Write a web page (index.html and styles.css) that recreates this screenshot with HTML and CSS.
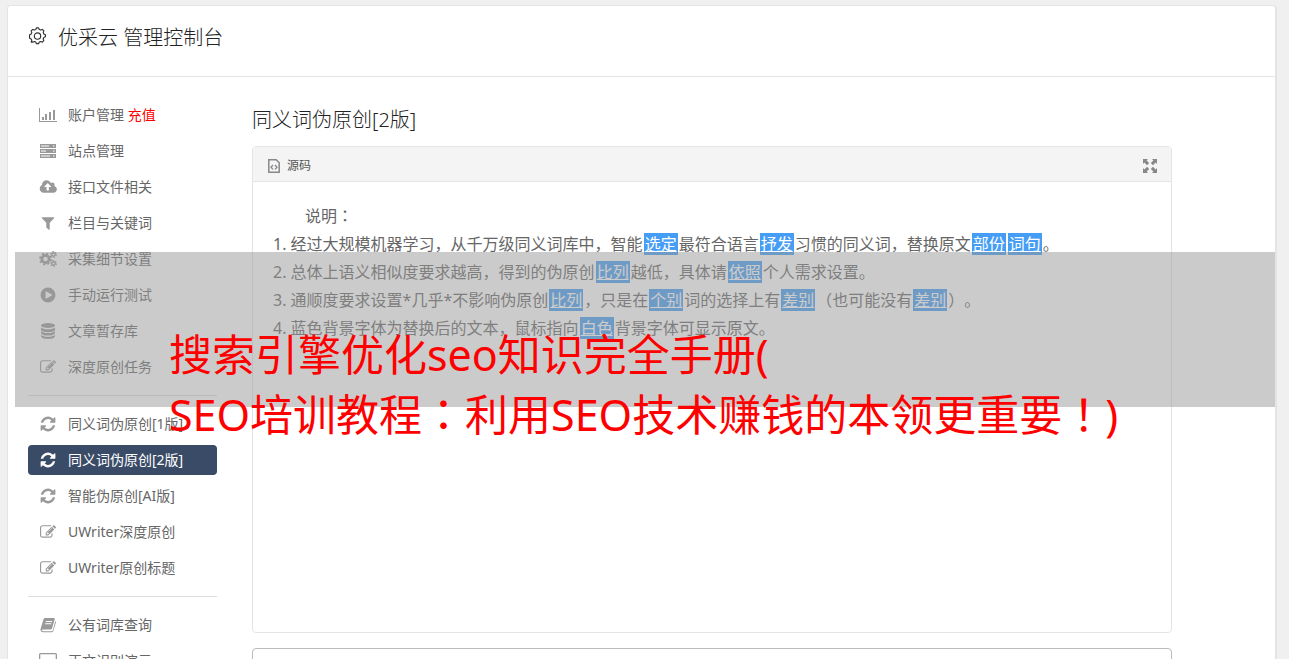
FILE: index.html
```html
<!DOCTYPE html>
<html lang="zh-CN">

<head>
    <meta charset="utf-8">
    <meta name="viewport" content="width=device-width, initial-scale=1.0">
    <title>优采云 管理控制台</title>
    <link rel="stylesheet" href="styles.css">
</head>

<body>
    <!-- shared icons -->
    <svg class="sprite" aria-hidden="true">
        <symbol id="i-refresh" viewBox="-64 -64 1664 1664">
            <path d="M1511 928q0 5-1 7-64 268-268 434.5t-478 166.5q-146 0-282.5-55t-243.5-157l-129 129q-19 19-45 19t-45-19-19-45v-448q0-26 19-45t45-19h448q26 0 45 19t19 45-19 45l-137 137q71 66 161 102t187 36q134 0 250-65t186-179q11-17 53-117 8-23 30-23h192q13 0 22.5 9.5t9.5 22.5zm25-800v448q0 26-19 45t-45 19h-448q-26 0-45-19t-19-45 19-45l138-138q-148-137-349-137-134 0-250 65t-186 179q-11 17-53 117-8 23-30 23h-199q-13 0-22.5-9.5t-9.5-22.5v-7q65-268 270-434.5t480-166.5q146 0 284 55.5t245 156.5l130-129q19-19 45-19t45 19 19 45z"/>
        </symbol>
        <symbol id="i-edit" viewBox="0 0 1792 1792">
            <path d="M888 1184l116-116-152-152-116 116v56h96v96h56zm440-720q-16-16-33 1l-350 350q-17 17-1 33t33-1l350-350q17-17 1-33zm80 594v190q0 119-84.5 203.5t-203.5 84.5h-832q-119 0-203.5-84.5t-84.5-203.5v-832q0-119 84.5-203.5t203.5-84.5h832q63 0 117 25 15 7 18 23 3 17-9 29l-49 49q-14 14-32 8-23-6-45-6h-832q-66 0-113 47t-47 113v832q0 66 47 113t113 47h832q66 0 113-47t47-113v-126q0-13 9-22l64-64q15-15 35-7t20 29zm-96-738l288 288-672 672h-288v-288zm444 132l-92 92-288-288 92-92q28-28 68-28t68 28l152 152q28 28 28 68t-28 68z"/>
        </symbol>
    </svg>

    <div class="card">
        <header class="card-header">
            <svg class="gear" viewBox="0 0 18 18" fill="none" stroke="currentColor">
                <path stroke-width="1.1" stroke-linejoin="round" d="M7.3 2.4 8 .9h2l.7 1.5 1.3.5 1.6-.6 1.4 1.4-.6 1.6.6 1.3 1.5.7v2l-1.5.7-.6 1.4.6 1.5-1.4 1.4-1.6-.6-1.3.6-.7 1.5H8l-.7-1.5-1.3-.6-1.6.6L3 14.3l.6-1.5-.6-1.4-1.5-.7V7.3L3 6.600l.6-1.3L3 3.700l1.400-1.400 1.600.6z"/>
                <circle cx="9" cy="8.6" r="3" stroke-width="1.1"/>
            </svg>
            <h1>优采云 管理控制台</h1>
        </header>

        <div class="card-body">
            <nav class="sidebar">
                <a href="#">
                    <svg class="wide" viewBox="0 0 18 16"><path d="M0 1h1v13h17v1H0zM3 10h2v3H3zM6 7h2v6H6zM10 5h2v8h-2zM14 3h2v10h-2z"/></svg>
                    <span>账户管理 <em>充值</em></span>
                </a>
                <a href="#">
                    <svg viewBox="0 0 16 16"><path fill-rule="evenodd" d="M0 1h16v4H0zM1 2.500v1h8v-1zM13 2.500v1h1.500v-1zM0 6h16v4H0zM1 7.500v1h5v-1zM13 7.500v1h1.500v-1zM0 11h16v4H0zM1 12.500v1h9v-1zM13 12.500v1h1.500v-1z"/></svg>
                    <span>站点管理</span>
                </a>
                <a href="#">
                    <svg class="wide" viewBox="0 0 1984 1792"><path d="M1344 864q0-14-9-23l-352-352q-9-9-23-9t-23 9l-351 351q-10 12-10 24 0 14 9 23t23 9h224v352q0 13 9.500 22.500t22.500 9.500h192q13 0 22.500-9.500t9.500-22.500v-352h224q13 0 22.500-9.500t9.500-22.500zm640 288q0 159-112.500 271.500t-271.500 112.500h-1088q-185 0-316.500-131.500t-131.500-316.500q0-130 70-240t188-165q-2-30-2-43 0-212 150-362t362-150q156 0 285.500 87t188.500 231q71-62 166-62 106 0 181 75t75 181q0 76-41 138 130 31 213.500 135.500t83.500 238.500z"/></svg>
                    <span>接口文件相关</span>
                </a>
                <a href="#">
                    <svg viewBox="0 0 1792 1792"><path d="M1595 295q17 41-14 70l-493 493v742q0 42-39 59-13 5-25 5-27 0-45-19l-256-256q-19-19-19-45v-486l-493-493q-31-29-14-70 17-39 59-39h1280q42 0 59 39z"/></svg>
                    <span>栏目与关键词</span>
                </a>
                <a href="#">
                    <svg class="wide" viewBox="0 0 18 16" fill="none" stroke="currentColor">
                        <circle cx="6.500" cy="8" r="3.600" stroke-width="2.600"/>
                        <circle cx="6.500" cy="8" r="5.500" stroke-width="1.800" stroke-dasharray="2.160"/>
                        <circle cx="14.500" cy="3.500" r="1.700" stroke-width="1.400"/>
                        <circle cx="14.500" cy="3.500" r="2.800" stroke-width="1.200" stroke-dasharray="1.466"/>
                        <circle cx="14.500" cy="12.500" r="1.700" stroke-width="1.400"/>
                        <circle cx="14.500" cy="12.500" r="2.800" stroke-width="1.200" stroke-dasharray="1.466"/>
                    </svg>
                    <span>采集细节设置</span>
                </a>
                <a href="#">
                    <svg viewBox="64 64 1664 1664"><path d="M896 128q209 0 385.500 103t279.500 279.500 103 385.500-103 385.500-279.500 279.500-385.500 103-385.500-103-279.500-279.500-103-385.500 103-385.500 279.500-279.500 385.500-103zm384 823q32-18 32-55t-32-55l-544-320q-31-19-64-1-32 19-32 56v640q0 37 32 56 16 8 32 8 17 0 32-9z"/></svg>
                    <span>手动运行测试</span>
                </a>
                <a href="#">
                    <svg viewBox="0 0 16 16">
                        <ellipse cx="8" cy="2.500" rx="7" ry="2.500"/>
                        <path d="M1 4.500q2 1.800 7 1.800t7-1.800V7q-1 2.200-7 2.200T1 7zM1 8.300q2 1.800 7 1.800t7-1.800v2q-1 2.300-7 2.300t-7-2.300zM1 11.900q2 1.800 7 1.800t7-1.800v1.600Q14 16 8 16t-7-2.500z"/>
                    </svg>
                    <span>文章暂存库</span>
                </a>
                <a href="#">
                    <svg class="wide"><use href="#i-edit"/></svg>
                    <span>深度原创任务</span>
                </a>
                <hr>
                <a href="#">
                    <svg><use href="#i-refresh"/></svg>
                    <span>同义词伪原创[1版]</span>
                </a>
                <a href="#" class="active">
                    <svg><use href="#i-refresh"/></svg>
                    <span>同义词伪原创[2版]</span>
                </a>
                <a href="#">
                    <svg><use href="#i-refresh"/></svg>
                    <span>智能伪原创[AI版]</span>
                </a>
                <a href="#">
                    <svg class="wide"><use href="#i-edit"/></svg>
                    <span>UWriter深度原创</span>
                </a>
                <a href="#">
                    <svg class="wide"><use href="#i-edit"/></svg>
                    <span>UWriter原创标题</span>
                </a>
                <hr>
                <a href="#">
                    <svg viewBox="0 0 16 16">
                        <path fill-rule="evenodd" d="M5 1h9q1 .2.700 1.300L12 11.500q-.4 1-1.400 1H3q-1.300.2-1 1 .2.700 1.200.7h8.500q.8 0 1.100-.8L15.300 4q.9.400.6 1.400l-2.600 8.600q-.4 1.200-1.600 1.200H2.800Q.6 15 .5 13q0-.8.3-1.700l2.500-8.600Q3.900 1.200 5 1zM6 4l-.3 1h6.200l.3-1zM5.300 6.300l-.3 1h6.200l.3-1z"/>
                    </svg>
                    <span>公有词库查询</span>
                </a>
                <a href="#">
                    <svg class="wide" viewBox="0 0 18 16"><path fill-rule="evenodd" d="M1.500 0h15Q18 0 18 1.500v10q0 1.500-1.500 1.500H11l1 3H6l1-3H1.500Q0 13 0 11.500v-10Q0 0 1.500 0zM1.300 1.300v8.700h15.400V1.300z"/></svg>
                    <span>正文识别演示</span>
                </a>
            </nav>

            <main class="content">
                <h2>同义词伪原创[2版]</h2>

                <section class="editor">
                    <div class="toolbar">
                        <button type="button" class="source">
                            <svg viewBox="0 0 12 14" fill="none" stroke="currentColor">
                                <path stroke-width="1.500" d="M.8.800h7.400l3 3v9.400H.8z"/>
                                <path stroke-width="1.300" d="M5 6 3 8.200l2 2.200M7 6l2 2.200-2 2.200"/>
                            </svg>
                            <span>源码</span>
                        </button>
                        <button type="button" class="expand" aria-label="全屏">
                            <svg viewBox="0 0 14 14"><path d="M0 0h5L3.600 1.400 6.200 4 4 6.200 1.400 3.600 0 5zM14 0v5l-1.400-1.400L10 6.200 7.800 4l2.600-2.600L9 0zM0 14V9l1.400 1.400L4 7.800 6.200 10l-2.600 2.600L5 14zM14 14H9l1.400-1.400L7.800 10 10 7.800l2.600 2.600L14 9z"/></svg>
                        </button>
                    </div>
                    <div class="text">
                        <p>说明<span class="wide-mark" lang="zh-TW">：</span></p>
                        <ol>
                            <li>经过大规模机器学习，从千万级同义词库中，智能<a href="#">选定</a>最符合语言<a href="#">抒发</a>习惯的同义词，替换原文<a href="#">部份</a><a href="#">词句</a>。</li>
                            <li>总体上语义相似度要求越高，得到的伪原创<a href="#">比列</a>越低，具体请<a href="#">依照</a>个人需求设置。</li>
                            <li>通顺度要求设置*几乎*不影响伪原创<a href="#">比列</a>，只是在<a href="#">个别</a>词的选择上有<a href="#">差别</a>（也可能没有<a href="#">差别</a>）。</li>
                            <li>蓝色背景字体为替换后的文本，鼠标指向<a href="#">白色</a>背景字体可显示原文。</li>
                        </ol>
                    </div>
                </section>

                <textarea class="result" aria-label="结果"></textarea>
            </main>
        </div>

        <div class="banner">
            <p>搜索引擎优化seo知识完全手册(<br>SEO培训教程<span class="wide-mark" lang="zh-TW">：</span>利用SEO技术赚钱的本领更重要<span class="wide-mark" lang="zh-TW">！</span>)</p>
        </div>
    </div>
</body>

</html>
```

FILE: styles.css
```css
* {
    margin: 0;
    padding: 0;
    box-sizing: border-box;
}

body {
    height: 100vh;
    padding: 5px 12px 0 7px;
    overflow: hidden;
    background-color: #f0f0f0;
    color: #666;
    font-family: "Noto Sans", "Noto Sans CJK SC", sans-serif;
    font-size: 14px;
    text-spacing-trim: space-all;
}

a {
    color: inherit;
    text-decoration: none;
}

button {
    border: none;
    background: none;
    color: inherit;
    font: inherit;
    cursor: pointer;
}

h1,
h2 {
    color: #222;
    font-size: 20px;
    font-weight: 300;
    line-height: 30px;
}

.sprite {
    display: none;
}

/* punctuation centred in its cell */
.wide-mark {
    font-family: "Noto Sans CJK TC", sans-serif;
    line-height: 1;
}

.card {
    position: relative;
    border: 1px solid #e4e4e4;
    border-right-width: 2px;
    border-radius: 4px;
    background-color: #fff;
}

.card-header {
    display: flex;
    gap: 11px;
    padding: 17px 20px 23px;
    border-bottom: 1px solid #e4e4e4;
}

.gear {
    width: 19px;
    height: 19px;
    margin-top: 4px;
    color: #333;
}

.card-body {
    display: flex;
    gap: 35px;
    padding: 0 20px 20px;
}

/* left menu */
.sidebar {
    flex: 0 0 189px;
    padding-top: 23px;
}

.sidebar a {
    display: grid;
    grid-template-columns: 20px 1fr;
    gap: 10px;
    align-items: center;
    height: 30px;
    margin-bottom: 6px;
    padding: 0 10px;
    border-radius: 4px;
    white-space: nowrap;
}

.sidebar span,
.source span {
    padding-bottom: 2px;
}

.sidebar svg {
    width: 16px;
    height: 16px;
    justify-self: center;
    color: #999;
    fill: currentColor;
}

.sidebar svg[fill="none"] {
    fill: none;
}

.sidebar svg.wide {
    width: 18px;
}

.sidebar em {
    color: #f00;
    font-style: normal;
}

.sidebar .active,
.sidebar .active svg {
    background-color: #3a4b67;
    color: #fff;
}

.sidebar hr {
    margin: 13px 0;
    border: none;
    border-top: 1px solid #ddd;
}

/* text editor */
.content {
    flex: 1;
    max-width: 920px;
    padding-top: 28px;
}

.editor {
    margin-top: 11px;
    border: 1px solid #e4e4e4;
    border-radius: 4px;
}

.toolbar {
    display: flex;
    justify-content: space-between;
    align-items: center;
    height: 35px;
    padding: 3px 14px 0 15px;
    border-bottom: 1px solid #e4e4e4;
    background-color: #f4f4f4;
}

.source {
    display: flex;
    align-items: center;
    gap: 7px;
    color: #555;
    font-size: 12px;
}

.source svg {
    width: 12px;
    height: 14px;
    color: #888;
}

.expand svg {
    display: block;
    width: 14px;
    height: 14px;
    fill: #888;
}

.text {
    min-height: 450px;
    padding: 20px;
    font-size: 16px;
    line-height: 28px;
}

.text p {
    text-indent: 2em;
}

.text ol {
    list-style-position: inside;
}

.text a {
    margin: 0 1px;
    padding: 0 1px;
    background-color: #459df5;
    color: #fff;
    text-decoration: underline;
}

.result {
    display: block;
    width: 100%;
    height: 200px;
    margin-top: 15px;
    border: 1px solid #bbb;
    border-radius: 4px;
    resize: none;
}

/* headline laid over the page */
.banner {
    position: absolute;
    top: 246px;
    left: 7px;
    right: 0;
    height: 155px;
    padding: 73px 0 0 154px;
    background-color: rgba(151, 151, 151, 0.5);
    color: #f00;
    font-size: 43px;
    line-height: 60px;
    white-space: nowrap;
    pointer-events: none;
}
```
